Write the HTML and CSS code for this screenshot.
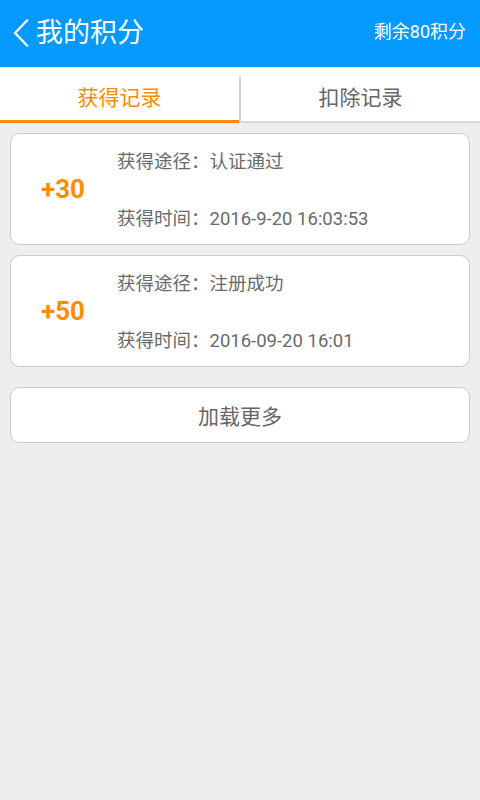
FILE: index.html
```html
<!DOCTYPE html>
<html lang="zh-CN">
<head>
<meta charset="utf-8">
<title>我的积分</title>
<link rel="stylesheet" href="styles.css">
</head>
<body>
<header class="topbar">
  <div class="topbar-left">
    <svg class="back" width="18" height="28" viewBox="0 0 18 28"><path d="M15 1.5 L3 14 L15 26.5" fill="none" stroke="#fff" stroke-width="2.2" stroke-linecap="square"/></svg>
    <span class="title">我的积分</span>
  </div>
  <span class="remain">剩余80积分</span>
</header>
<nav class="tabs">
  <div class="tab active">获得记录</div>
  <div class="tab-sep"></div>
  <div class="tab">扣除记录</div>
</nav>
<main class="list">
  <div class="card">
    <div class="points">+30</div>
    <div class="info">
      <div class="line">获得途径：认证通过</div>
      <div class="line">获得时间：2016-9-20 16:03:53</div>
    </div>
  </div>
  <div class="card">
    <div class="points">+50</div>
    <div class="info">
      <div class="line">获得途径：注册成功</div>
      <div class="line">获得时间：2016-09-20 16:01</div>
    </div>
  </div>
  <div class="more">加载更多</div>
</main>
</body>
</html>
```
FILE: styles.css
```css
html, body {
  margin: 0;
  padding: 0;
  height: 100%;
}
body {
  background: #eeeeee;
  font-family: Roboto, "Noto Sans CJK SC", sans-serif;
}
.topbar {
  height: 67px;
  background: #0399fd;
  display: flex;
  align-items: center;
  justify-content: space-between;
  color: #fff;
  padding: 0 14px 0 12px;
}
.topbar-left {
  display: flex;
  align-items: center;
}
.back {
  display: block;
  margin-right: 6px;
  margin-top: -1px;
}
.title {
  font-size: 27px;
  line-height: 30px;
  margin-top: -1px;
}
.remain {
  font-size: 18px;
  line-height: 22px;
  margin-top: -3px;
}
.tabs {
  height: 54px;
  background: #fff;
  display: flex;
  align-items: stretch;
  border-bottom: 2px solid #d8d8d8;
}
.tab {
  flex: 1;
  display: flex;
  align-items: center;
  justify-content: center;
  font-size: 21px;
  color: #666;
  padding-top: 4px;
  border-bottom: 3px solid transparent;
  margin-bottom: -2px;
}
.tab.active {
  color: #ff8c00;
  border-bottom-color: #ff8c00;
}
.tab-sep {
  width: 2px;
  background: #d0d0d0;
  margin-top: 10px;
}
.list {
  padding: 10px 10px;
  display: flex;
  flex-direction: column;
  gap: 10px;
}
.card {
  height: 110px;
  background: #fff;
  border: 1px solid #cccccc;
  border-radius: 10px;
  display: flex;
  align-items: center;
}
.points {
  width: 106px;
  padding-left: 30px;
  box-sizing: border-box;
  color: #ff8c00;
  font-size: 26px;
  font-weight: bold;
  margin-top: 0;
}
.info {
  display: flex;
  flex-direction: column;
  gap: 33px;
  margin-top: 3px;
}
.line {
  font-size: 18.5px;
  line-height: 24px;
  color: #6a6a6a;
}
.more {
  margin-top: 10px;
  height: 54px;
  background: #fff;
  border: 1px solid #cccccc;
  border-radius: 10px;
  display: flex;
  align-items: center;
  justify-content: center;
  font-size: 21px;
  color: #666;
}
```
